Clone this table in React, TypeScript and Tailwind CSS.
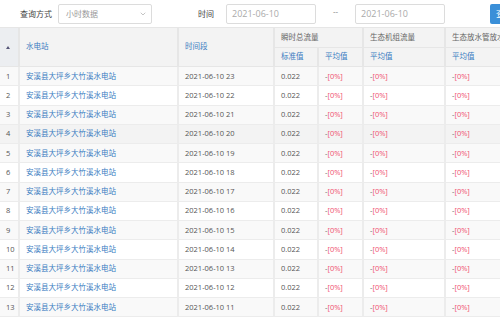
import { ChevronDown } from "lucide-react";

const rows = Array.from({ length: 13 }, (_, i) => ({
  idx: i + 1,
  station: "安溪县大坪乡大竹溪水电站",
  time: `2021-06-10 ${23 - i}`,
}));

function Pct() {
  return (
    <span>
      <span className="text-[#666]">-</span>
      <span className="text-[#f0506e]">[0%]</span>
    </span>
  );
}

export default function App() {
  const th = "border-r-2 border-b border-[#e6e6e6] text-left font-normal px-[6px]";
  const td = "border-r-2 border-b border-[#ececec] px-[6px] h-[19.25px] whitespace-nowrap";

  return (
    <div
      className="w-[500px] h-[320px] overflow-hidden bg-white text-[7.5px] text-[#555]"
      style={{ fontFamily: '"Open Sans", "Noto Sans CJK SC", sans-serif' }}
    >
      <div className="h-[27px] flex items-center text-[8px] text-[#444] *:shrink-0">
        <span className="ml-[20px] w-[38px]">查询方式</span>
        <div className="w-[94px] h-[20px] border border-[#dcdcdc] rounded-[2px] flex items-center justify-between pl-[7px] pr-[4px] text-[#999]">
          <span>小时数据</span>
          <ChevronDown className="w-[8px] h-[8px] text-[#888]" strokeWidth={1.5} />
        </div>
        <span className="ml-[46px] w-[28px]">时间</span>
        <div className="w-[90px] h-[20px] border border-[#dcdcdc] rounded-[2px] flex items-center pl-[5px] text-[9px] text-[#aaa]">
          2021-06-10
        </div>
        <span className="w-[39px] text-center text-[#777] -mt-[6px]">--</span>
        <div className="w-[90px] h-[20px] border border-[#dcdcdc] rounded-[2px] flex items-center pl-[5px] text-[9px] text-[#aaa]">
          2021-06-10
        </div>
        <div className="ml-[45px] w-[30px] h-[20px] bg-[#3a8fd8] rounded-[2px] text-white text-[9px] pl-[6px] flex items-center">
          查询
        </div>
      </div>

      <table className="table-fixed border-collapse w-[590px] border-t border-[#e6e6e6]">
        <colgroup>
          <col className="w-[19px]" />
          <col className="w-[159px]" />
          <col className="w-[96px]" />
          <col className="w-[44px]" />
          <col className="w-[45px]" />
          <col className="w-[82px]" />
          <col className="w-[145px]" />
        </colgroup>
        <thead className="bg-[#f3f3f3]">
          <tr className="h-[20px]">
            <th rowSpan={2} className={`${th} bg-[#eceef1] text-center px-0`}>
              <span className="inline-block w-0 h-0 border-l-[2px] border-r-[2px] border-b-[3px] border-l-transparent border-r-transparent border-b-[#557]" />
            </th>
            <th rowSpan={2} className={`${th} text-[#3a7cc1]`}>水电站</th>
            <th rowSpan={2} className={`${th} text-[#3a7cc1]`}>时间段</th>
            <th colSpan={2} className={`${th} text-[#666]`}>瞬时总流量</th>
            <th className={`${th} text-[#666]`}>生态机组流量</th>
            <th className={`${th} text-[#666] whitespace-nowrap`}>生态放水管放水流量</th>
          </tr>
          <tr className="h-[19px]">
            <th className={`${th} text-[#3a7cc1]`}>标准值</th>
            <th className={`${th} text-[#3a7cc1]`}>平均值</th>
            <th className={`${th} text-[#3a7cc1]`}>平均值</th>
            <th className={`${th} text-[#3a7cc1]`}>平均值</th>
          </tr>
        </thead>
        <tbody>
          {rows.map((r) => (
            <tr
              key={r.idx}
              className={
                r.idx === 4 ? "bg-[#f3f3f3]" : r.idx % 2 === 1 ? "bg-[#f9f9f9]" : "bg-white"
              }
            >
              <td className={`${td} px-[3px]`}>{r.idx}</td>
              <td className={`${td} text-[#3a7cc1]`}>{r.station}</td>
              <td className={td}>{r.time}</td>
              <td className={td}>0.022</td>
              <td className={td}><Pct /></td>
              <td className={td}><Pct /></td>
              <td className={td}><Pct /></td>
            </tr>
          ))}
        </tbody>
      </table>
    </div>
  );
}
